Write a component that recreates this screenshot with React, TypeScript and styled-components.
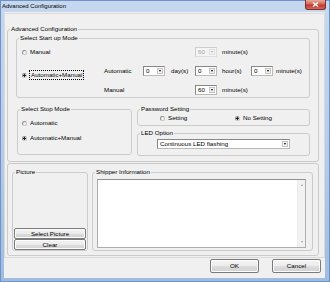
import React from "react";
import styled, { createGlobalStyle } from "styled-components";

const GlobalStyle = createGlobalStyle`
  html, body { margin: 0; padding: 0; background: #ffffff; }
  body {
    font-family: "Liberation Sans", Arial, sans-serif;
    font-size: 6.2px;
    color: #000;
  }
`;

const Window = styled.div`
  width: 330px;
  height: 282px;
  display: flex;
  flex-direction: column;
  background: linear-gradient(to bottom, #c6d8ef, #b3cae8 60%, #9fbbe0);
  box-shadow: inset 0 0 0 1px #6f93c4;
`;

const TitleBar = styled.div`
  height: 12px;
  flex: none;
  display: flex;
  align-items: flex-start;
  justify-content: space-between;
  padding-left: 2px;
`;

const TitleText = styled.span`
  font-size: 6px;
  line-height: 12px;
`;

const CloseButton = styled.div`
  width: 21px;
  height: 10px;
  margin-right: 4px;
  box-sizing: border-box;
  border: 1px solid #7a2f29;
  border-top: none;
  border-radius: 0 0 3px 3px;
  background: linear-gradient(to bottom, #e9a99d, #d4665a 45%, #c0392f 55%, #d5675a);
  display: flex;
  align-items: center;
  justify-content: center;
`;

const Client = styled.div`
  flex: 1;
  margin: 0 5px 4px 4px;
  background: #f0f0f0;
  display: flex;
  flex-direction: column;
`;

const Panel = styled.div`
  margin-top: 1px;
  height: 245px;
  box-sizing: border-box;
  border: 1px solid #dadada;
  padding: 11px 5px 1px 2px;
  display: flex;
  flex-direction: column;
  gap: 1px;
`;

const Group = styled.fieldset<{ $h: number; $w?: number }>`
  margin: 0;
  padding: 0;
  border: 1px solid #cbcbcb;
  border-radius: 3px;
  box-sizing: border-box;
  min-width: 0;
  height: ${(p) => p.$h}px;
  ${(p) => (p.$w ? `width: ${p.$w}px; flex: none;` : "")}
`;

const Legend = styled.legend`
  margin-left: 2px;
  padding: 0 1px;
  height: 8px;
  line-height: 8px;
  font-size: 6.2px;
`;

const AdvBody = styled.div`
  display: flex;
  flex-direction: column;
  gap: 7px;
  padding: 1px 8px 0;
`;

const StartGrid = styled.div`
  display: grid;
  grid-template-columns: 87px 39px 28px 24px 27px 29px 25px auto;
  grid-template-rows: 10px 10px 10px;
  row-gap: 9px;
  padding-top: 5px;
  align-items: center;
`;

const Cell = styled.div<{ $c: number; $r: number; $span?: number }>`
  grid-column: ${(p) => p.$c};
  grid-row: ${(p) => (p.$span ? `${p.$r} / span ${p.$span}` : p.$r)};
  line-height: 8px;
  white-space: nowrap;
`;

const RadioCell = styled(Cell)<{ $top?: number }>`
  align-self: ${(p) => (p.$top ? "start" : "center")};
  margin-top: ${(p) => p.$top || 0}px;
  padding-left: 5px;
`;

const Radio = styled.div`
  display: flex;
  align-items: center;
  gap: 3px;
  line-height: 8px;
  white-space: nowrap;
`;

const RadioDot = styled.span<{ $on?: boolean }>`
  width: 5px;
  height: 5px;
  flex: none;
  box-sizing: border-box;
  border-radius: 50%;
  border: 1px solid #8d8d8d;
  border-right-color: #c6c6c6;
  border-bottom-color: #c6c6c6;
  background: ${(p) =>
    p.$on ? "radial-gradient(circle, #1c1c1c 0 1.1px, #f6f6f6 1.4px)" : "#f6f6f6"};
`;

const FocusText = styled.span`
  border: 1px dotted #000;
  padding: 0 1px;
  margin-left: -1px;
`;

const Combo = styled.div<{ $w: number; $disabled?: boolean }>`
  width: ${(p) => p.$w}px;
  height: 10px;
  box-sizing: border-box;
  display: flex;
  border: 1px solid ${(p) => (p.$disabled ? "#cdcdcd" : "#878787")};
  border-right-color: ${(p) => (p.$disabled ? "#dedede" : "#b9b9b9")};
  border-bottom-color: ${(p) => (p.$disabled ? "#dedede" : "#b9b9b9")};
  background: ${(p) => (p.$disabled ? "#f4f4f4" : "#ffffff")};
  color: ${(p) => (p.$disabled ? "#a3a3a3" : "#000")};
`;

const ComboValue = styled.span`
  flex: 1;
  padding-left: 2px;
  line-height: 8px;
  overflow: hidden;
  white-space: nowrap;
`;

const ComboArrow = styled.span<{ $disabled?: boolean }>`
  width: 6px;
  flex: none;
  box-sizing: border-box;
  margin: 1px 1px 1px 0;
  border: 1px solid ${(p) => (p.$disabled ? "#e0e0e0" : "#c4c4c4")};
  background: #f3f3f3;
  display: flex;
  align-items: center;
  justify-content: center;
  &::after {
    content: "";
    border-left: 1.5px solid transparent;
    border-right: 1.5px solid transparent;
    border-top: 2px solid ${(p) => (p.$disabled ? "#b0b0b0" : "#000")};
  }
`;

const Row = styled.div`
  display: flex;
  gap: 5px;
  margin-left: 1px;
`;

const Column = styled.div`
  display: flex;
  flex-direction: column;
  gap: 3px;
  flex: 1;
`;

const StopBody = styled.div`
  display: flex;
  flex-direction: column;
  gap: 7px;
  padding: 6px 0 0 4px;
`;

const PasswordBody = styled.div`
  display: grid;
  grid-template-columns: 75px auto;
  padding: 1px 0 0 22px;
`;

const LedBody = styled.div`
  padding: 2px 0 0 19px;
`;

const MiscBody = styled.div`
  display: flex;
  gap: 4px;
  padding: 4px 5px 4px 4px;
`;

const PictureBody = styled.div`
  height: 74px;
  display: flex;
  flex-direction: column;
  justify-content: flex-end;
  padding: 0 1px;
`;

const Button = styled.div<{ $w?: number; $h: number }>`
  ${(p) => (p.$w ? `width: ${p.$w}px;` : "")}
  height: ${(p) => p.$h}px;
  box-sizing: border-box;
  border: 1px solid #7b7b7b;
  border-radius: 2px;
  background: linear-gradient(to bottom, #f4f4f4, #ebebeb 50%, #dddddd 51%, #d2d2d2);
  box-shadow: inset 0 0 0 1px #fcfcfc;
  display: flex;
  align-items: center;
  justify-content: center;
  line-height: 8px;
  white-space: nowrap;
`;

const ShipperBody = styled.div`
  padding: 3px 6px 2px 4px;
`;

const TextBox = styled.div`
  height: 69px;
  box-sizing: border-box;
  border: 1px solid #abadb3;
  border-top-color: #8e9096;
  background: #ffffff;
  display: flex;
  justify-content: flex-end;
`;

const ScrollTrack = styled.div`
  width: 7px;
  background: #f2f2f2;
  border-left: 1px solid #ececec;
  display: flex;
  flex-direction: column;
  justify-content: space-between;
  align-items: center;
  padding: 4px 0;
`;

const ScrollArrow = styled.span<{ $up?: boolean }>`
  width: 0;
  height: 0;
  border-left: 1.5px solid transparent;
  border-right: 1.5px solid transparent;
  ${(p) => (p.$up ? "border-bottom: 2px solid #a0a0a0;" : "border-top: 2px solid #a0a0a0;")}
`;

const Footer = styled.div`
  display: flex;
  justify-content: flex-end;
  gap: 13px;
  margin-top: 1px;
  padding-right: 4px;
`;

export default function App() {
  return (
    <>
      <GlobalStyle />
      <Window>
        <TitleBar>
          <TitleText>Advanced Configuration</TitleText>
          <CloseButton>
            <svg width="7" height="5" viewBox="0 0 7 5">
              <path d="M1 0.5 L6 4.5 M6 0.5 L1 4.5" stroke="#fff" strokeWidth="1.3" />
            </svg>
          </CloseButton>
        </TitleBar>
        <Client>
          <Panel>
            <Group $h={137}>
              <Legend>Advanced Configuration</Legend>
              <AdvBody>
                <Group $h={64}>
                  <Legend>Select Start up Mode</Legend>
                  <StartGrid>
                    <RadioCell $c={1} $r={1}>
                      <Radio>
                        <RadioDot />
                        Manual
                      </Radio>
                    </RadioCell>
                    <Cell $c={5} $r={1}>
                      <Combo $w={22} $disabled>
                        <ComboValue>60</ComboValue>
                        <ComboArrow $disabled />
                      </Combo>
                    </Cell>
                    <Cell $c={6} $r={1}>minute(s)</Cell>

                    <RadioCell $c={1} $r={2} $span={2} $top={4}>
                      <Radio>
                        <RadioDot $on />
                        <FocusText>Automatic+Manual</FocusText>
                      </Radio>
                    </RadioCell>
                    <Cell $c={2} $r={2}>Automatic</Cell>
                    <Cell $c={3} $r={2}>
                      <Combo $w={22}>
                        <ComboValue>0</ComboValue>
                        <ComboArrow />
                      </Combo>
                    </Cell>
                    <Cell $c={4} $r={2}>day(s)</Cell>
                    <Cell $c={5} $r={2}>
                      <Combo $w={22}>
                        <ComboValue>0</ComboValue>
                        <ComboArrow />
                      </Combo>
                    </Cell>
                    <Cell $c={6} $r={2}>hour(s)</Cell>
                    <Cell $c={7} $r={2}>
                      <Combo $w={22}>
                        <ComboValue>0</ComboValue>
                        <ComboArrow />
                      </Combo>
                    </Cell>
                    <Cell $c={8} $r={2}>minute(s)</Cell>

                    <Cell $c={2} $r={3}>Manual</Cell>
                    <Cell $c={5} $r={3}>
                      <Combo $w={22}>
                        <ComboValue>60</ComboValue>
                        <ComboArrow />
                      </Combo>
                    </Cell>
                    <Cell $c={6} $r={3}>minute(s)</Cell>
                  </StartGrid>
                </Group>

                <Row>
                  <Group $h={50} $w={115}>
                    <Legend>Select Stop Mode</Legend>
                    <StopBody>
                      <Radio>
                        <RadioDot />
                        Automatic
                      </Radio>
                      <Radio>
                        <RadioDot $on />
                        Automatic+Manual
                      </Radio>
                    </StopBody>
                  </Group>
                  <Column>
                    <Group $h={21}>
                      <Legend>Password Setting</Legend>
                      <PasswordBody>
                        <Radio>
                          <RadioDot />
                          Setting
                        </Radio>
                        <Radio>
                          <RadioDot $on />
                          No Setting
                        </Radio>
                      </PasswordBody>
                    </Group>
                    <Group $h={27}>
                      <Legend>LED Option</Legend>
                      <LedBody>
                        <Combo $w={133}>
                          <ComboValue>Continuous LED flashing</ComboValue>
                          <ComboArrow />
                        </Combo>
                      </LedBody>
                    </Group>
                  </Column>
                </Row>
              </AdvBody>
            </Group>

            <Group $h={93}>
              <MiscBody>
                <Group $h={83} $w={76}>
                  <Legend>Picture</Legend>
                  <PictureBody>
                    <Button $h={11}>Select Picture</Button>
                    <Button $h={11}>Clear</Button>
                  </PictureBody>
                </Group>
                <Group $h={83} $w={221}>
                  <Legend>Shipper Information</Legend>
                  <ShipperBody>
                    <TextBox>
                      <ScrollTrack>
                        <ScrollArrow $up />
                        <ScrollArrow />
                      </ScrollTrack>
                    </TextBox>
                  </ShipperBody>
                </Group>
              </MiscBody>
            </Group>
          </Panel>
          <Footer>
            <Button $w={49} $h={14}>OK</Button>
            <Button $w={49} $h={14}>Cancel</Button>
          </Footer>
        </Client>
      </Window>
    </>
  );
}
